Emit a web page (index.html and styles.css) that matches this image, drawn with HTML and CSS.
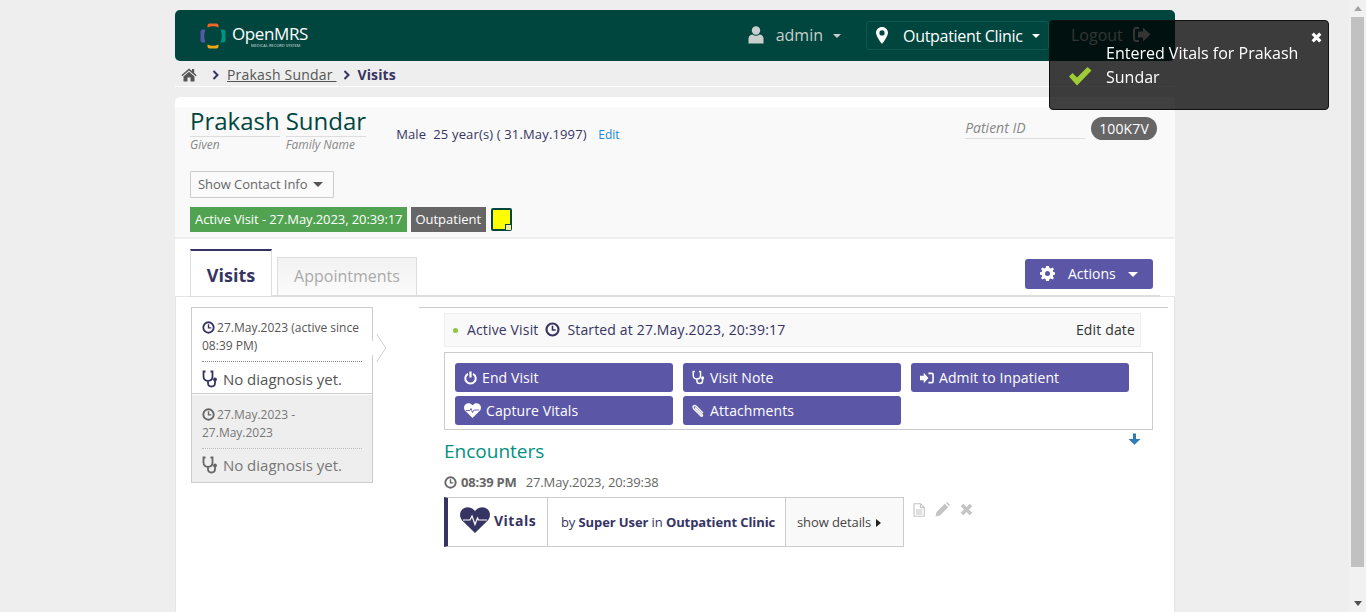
FILE: index.html
```html
<!DOCTYPE html>
<html lang="en">
<head>
<meta charset="utf-8">
<title>OpenMRS - Visits</title>
<link rel="stylesheet" href="styles.css">
</head>
<body>
<svg class="defs" width="0" height="0">
  <defs>
    <symbol id="i-clock" viewBox="0 0 14 14"><circle cx="7" cy="7" r="5.6" fill="none" stroke="currentColor" stroke-width="2"/><path d="M7 3.600V7.400H10" fill="none" stroke="currentColor" stroke-width="1.500"/></symbol>
    <symbol id="i-steth" viewBox="0 0 16 18"><path d="M3.500 1.500H1.500V6.500C1.500 9.500 3.800 10.800 6 10.800S10.500 9.500 10.500 6.500V1.500H8.500M6 10.800V13C6 15.200 7.500 16.500 9.500 16.500S13 15.200 13 13V10.500" fill="none" stroke="currentColor" stroke-width="1.800"/><circle cx="13" cy="9.500" r="1.900" fill="currentColor"/></symbol>
  </defs>
</svg>
<div class="viewport">
  <div class="page">
    <header class="topbar">
      <div class="logo">
        <svg class="logo-mark" width="26" height="26" viewBox="0 0 26 26">
          <path d="M7.500 4.500V2.500Q7.500 .500 9.500 .500H16.500Q18.500 .500 18.500 2.500V4.500Q13 2 7.500 4.500Z" fill="#f26522"/>
          <path d="M5.500 6.500H3Q.500 6.500 .500 9V17Q.500 19.500 3 19.500H5.500Q3 13 5.500 6.500Z" fill="#5b57a6"/>
          <path d="M20.500 6.500H23Q25.500 6.500 25.500 9V17Q25.500 19.500 23 19.500H20.500Q23 13 20.500 6.500Z" fill="#009384"/>
          <path d="M7.500 21.500V23.500Q7.500 25.500 9.500 25.500H16.500Q18.500 25.500 18.500 23.500V21.500Q13 24 7.500 21.500Z" fill="#eea616"/>
        </svg>
        <div class="logo-text">
          <span class="logo-name">OpenMRS</span>
          <span class="logo-sub">MEDICAL RECORD SYSTEM</span>
        </div>
      </div>
      <nav class="top-nav">
        <div class="nav-user">
          <svg class="user-icon" width="16" height="18" viewBox="0 0 16 18"><circle cx="8" cy="4.500" r="4.200" fill="#c9cfcc"/><path d="M0.500 17.500V12.500C0.500 9.800 3 8.500 4.500 8.500Q8 11 11.500 8.500C13 8.500 15.500 9.800 15.500 12.500V17.500Z" fill="#c9cfcc"/></svg>
          <span class="user-name">admin</span>
          <span class="caret-sm caret-grey"></span>
        </div>
        <div class="nav-location">
          <svg width="12" height="17" viewBox="0 0 12 17"><path fill-rule="evenodd" d="M6 0C2.700 0 0 2.600 0 5.800C0 9.500 6 17 6 17S12 9.500 12 5.800C12 2.600 9.300 0 6 0ZM6 3.300A2.600 2.600 0 1 1 6 8.500A2.600 2.600 0 0 1 6 3.300Z" fill="#fff"/></svg>
          <span class="loc-name">Outpatient Clinic</span>
          <span class="caret-sm"></span>
        </div>
        <div class="nav-logout">
          <span>Logout</span>
          <svg width="18" height="15" viewBox="0 0 18 15"><path d="M6 1H3Q1 1 1 3V12Q1 14 3 14H6" fill="none" stroke="#c9cfcc" stroke-width="2"/><path d="M5 4.500H10V0.500L17.500 7.500L10 14.500V10.500H5Z" fill="#c9cfcc"/></svg>
        </div>
      </nav>
    </header>

    <div class="crumbs">
      <svg class="home" width="16" height="14" viewBox="0 0 16 14"><path d="M8 0.500L0.300 7.200L1.300 8.300L8 2.500L14.700 8.300L15.700 7.200L13.200 5V1H11V3L8 0.500Z" fill="#555"/><path d="M2.500 8.500L8 3.800L13.500 8.500V13.500H9.500V9.500H6.500V13.500H2.500Z" fill="#555"/></svg>
      <svg class="chev chev-first" width="7" height="10" viewBox="0 0 7 10"><path d="M1.500 1L5.500 5L1.500 9" fill="none" stroke="#363463" stroke-width="2"/></svg>
      <a class="crumb-link">Prakash Sundar&nbsp;</a>
      <svg class="chev" width="7" height="10" viewBox="0 0 7 10"><path d="M1.500 1L5.500 5L1.500 9" fill="none" stroke="#363463" stroke-width="2"/></svg>
      <strong class="crumb-current">Visits</strong>
    </div>

    <main class="content">
      <section class="patient">
        <div class="patient-top">
          <div class="names">
            <div class="name-part name-given"><span class="name-val">Prakash</span><em>Given</em></div>
            <div class="name-part"><span class="name-val">Sundar</span><em>Family Name</em></div>
          </div>
          <div class="demo">Male&nbsp; 25 year(s) ( 31.May.1997) <a class="edit-link">Edit</a></div>
          <div class="pid">
            <em class="pid-label">Patient ID</em>
            <span class="pid-val">100K7V</span>
          </div>
        </div>
        <button class="contact-btn">Show Contact Info <span class="caret-sm caret-dark"></span></button>
        <div class="tags">
          <span class="tag tag-green">Active Visit - 27.May.2023, 20:39:17</span>
          <span class="tag tag-grey">Outpatient</span>
          <span class="sticky"><span class="sticky-fold"></span></span>
        </div>
      </section>

      <div class="tabs-row">
        <div class="tab tab-active">Visits</div>
        <div class="tab tab-idle">Appointments</div>
        <button class="actions-btn">
          <svg width="15" height="15" viewBox="0 0 15 15"><path fill-rule="evenodd" d="M6 0H9L9.400 2L10.800 2.600L12.500 1.400L14 3L12.800 4.600L13.300 6L15 6.200V8.800L13.300 9L12.800 10.400L14 12L12.500 13.600L10.800 12.400L9.400 13L9 15H6L5.600 13L4.200 12.400L2.500 13.600L1 12L2.200 10.400L1.700 9L0 8.800V6.200L1.700 6L2.200 4.600L1 3L2.500 1.400L4.200 2.600L5.600 2ZM7.500 5A2.500 2.500 0 1 0 7.500 10A2.500 2.500 0 0 0 7.500 5Z" fill="#fff"/></svg>
          <span>Actions</span>
          <span class="caret-md"></span>
        </button>
      </div>

      <div class="visits">
        <aside class="visit-list">
          <div class="visit visit-current">
            <p class="visit-date"><svg class="ic-clock" width="13" height="13"><use href="#i-clock"/></svg> 27.May.2023 (active since 08:39 PM)</p>
            <p class="visit-diag"><svg width="16" height="18"><use href="#i-steth"/></svg> No diagnosis yet.</p>
            <span class="visit-arrow"></span>
          </div>
          <div class="visit visit-past">
            <p class="visit-date"><svg class="ic-clock" width="13" height="13"><use href="#i-clock"/></svg> 27.May.2023 - 27.May.2023</p>
            <p class="visit-diag"><svg width="16" height="18"><use href="#i-steth"/></svg> No diagnosis yet.</p>
          </div>
        </aside>

        <section class="visit-detail">
          <div class="status">
            <span class="dot"></span>
            <span>Active Visit</span>
            <svg class="status-clock" width="15" height="15"><use href="#i-clock"/></svg>
            <span>Started at 27.May.2023, 20:39:17</span>
            <span class="edit-date">Edit date</span>
          </div>
          <div class="action-grid">
            <a class="act"><svg width="13" height="14" viewBox="0 0 13 14"><path d="M4 2.800A5.200 5.200 0 1 0 9 2.800" fill="none" stroke="#fff" stroke-width="2"/><path d="M6.500 0.500V6.500" stroke="#fff" stroke-width="2.200"/></svg>End Visit</a>
            <a class="act"><svg width="13" height="15" viewBox="0 0 16 18" color="#fff"><use href="#i-steth"/></svg>Visit Note</a>
            <a class="act"><svg width="14" height="12" viewBox="0 0 15 12"><path d="M0 3.500H4V0.500L9 6L4 11.500V8.500H0Z" fill="#fff"/><path d="M9 1H12.500Q14 1 14 2.500V9.500Q14 11 12.500 11H9" fill="none" stroke="#fff" stroke-width="1.700"/></svg>Admit to Inpatient</a>
            <a class="act"><svg width="17" height="15" viewBox="0 0 17 15"><path d="M8.500 15L1.200 7.800C-0.500 5.800 -0.300 3 1.400 1.400C3.300 -0.300 6.500 -0.200 8.500 2.300C10.500 -0.200 13.700 -0.300 15.600 1.400C17.300 3 17.500 5.800 15.800 7.800Z" fill="#fff"/><path d="M2 7.500H6L7 5.500L8.500 9.500L10 7H15" fill="none" stroke="#5b57a6" stroke-width="0.900"/></svg>Capture Vitals</a>
            <a class="act"><svg width="13" height="13" viewBox="0 0 13 13"><path d="M3 3.500L10 10.500Q11 11.500 10 12T8.500 11.500L1.500 4.500Q0.500 3 1.500 2T4 2L11 9" fill="none" stroke="#fff" stroke-width="1.400"/></svg>Attachments</a>
          </div>
          <div class="arrow-row">
            <svg width="13" height="12" viewBox="0 0 13 12"><path d="M5 0.500H8V6H12.500L6.500 11.800L0.500 6H5Z" fill="#2b7cb9"/></svg>
          </div>
          <h2 class="enc-title">Encounters</h2>
          <div class="enc-time">
            <svg width="13" height="13"><use href="#i-clock"/></svg>
            <strong>08:39 PM</strong>
            <span>27.May.2023, 20:39:38</span>
          </div>
          <div class="enc-row">
            <div class="encounter">
              <div class="enc-type">
                <svg width="30" height="26" viewBox="0 0 30 26"><path d="M15 26L2.200 13.500C-0.800 10 -0.600 5 2.400 2.300C5.800 -0.800 11.500 -0.400 15 4C18.500 -0.400 24.200 -0.800 27.600 2.300C30.600 5 30.800 10 27.800 13.500Z" fill="#363463"/><path d="M3 13H10L12 9L15 17.500L17.500 11L18.500 13H27" fill="none" stroke="#fff" stroke-width="1.200"/></svg>
                <strong>Vitals</strong>
              </div>
              <div class="enc-by">by <strong>Super User</strong> in <strong>Outpatient Clinic</strong></div>
              <div class="enc-more">show details <span class="tri-right"></span></div>
            </div>
            <div class="enc-icons">
              <svg width="12" height="14" viewBox="0 0 12 14"><path d="M1 .7H7.500L11.300 4.500V13.300H1Z M7.500 .7V4.500H11.300 M3 7H9.300 M3 9H9.300 M3 11H9.300" fill="none" stroke="#c4c4c4" stroke-width="1.100"/></svg>
              <svg width="15" height="15" viewBox="0 0 15 15"><path d="M0.500 14.500L1.500 10L9.800 1.700L13.300 5.200L5 13.500Z M10.800 0.700Q12 -0.300 13 0.700L14.300 2Q15.300 3 14.300 4.200Z" fill="#c4c4c4"/></svg>
              <svg width="13" height="13" viewBox="0 0 13 13"><path d="M2 2L11 11M11 2L2 11" stroke="#c4c4c4" stroke-width="3.600"/></svg>
            </div>
          </div>
        </section>
      </div>
    </main>
  </div>
  <div class="scrollbar">
    <span class="sb-up"></span>
    <span class="sb-thumb"></span>
    <span class="sb-down"></span>
  </div>
</div>

<div class="toast">
  <svg class="toast-check" width="24" height="20" viewBox="0 0 24 20"><path d="M1 10.500L4.500 7L9 11.500L19.500 1L23.500 4.500L9 19.500Z" fill="#9fcd35"/></svg>
  <p class="toast-text">Entered Vitals for Prakash Sundar</p>
  <svg class="toast-close" width="11" height="11" viewBox="0 0 11 11"><path d="M1.700 1.700L9.300 9.300M9.300 1.700L1.700 9.300" stroke="#fff" stroke-width="3.200"/></svg>
</div>
</body>
</html>
```
FILE: styles.css
```css
* { box-sizing: border-box; }
html, body { margin: 0; height: 612px; overflow: hidden; }
body { font-family: "Open Sans", "Noto Sans", sans-serif; font-size: 14px; color: #363463; background: #eee; }
p, h2 { margin: 0; }
em { font-style: italic; }
.defs { position: absolute; }
.viewport { display: flex; height: 612px; }
.page { flex: 1; min-width: 0; display: flex; flex-direction: column; align-items: center; padding-top: 10px; padding-left: 1px; }
.page > * { width: 1000px; flex: none; }

.topbar { height: 51px; background: #00463f; border-radius: 5px; display: flex; align-items: center; justify-content: space-between; }
.logo { display: flex; align-items: center; gap: 6px; margin-left: 25px; margin-top: 1px; }
.logo-text { display: flex; flex-direction: column; align-items: flex-start; width: 73px; color: #fff; }
.logo-name { font-size: 17px; line-height: 17px; letter-spacing: -0.400px; white-space: nowrap; }
.logo-sub { font-size: 4px; line-height: 5px; margin-top: 1px; margin-left: 19px; white-space: nowrap; opacity: .8; }
.top-nav { display: flex; align-items: center; }
.nav-user { display: flex; align-items: center; color: #c9cfcc; font-size: 16px; margin-right: 25px; }
.user-icon { margin-right: 12px; margin-top: -2px; }
.user-name { margin-right: 10px; margin-top: -1px; }
.nav-location { display: flex; align-items: center; width: 183px; height: 29px; padding-left: 9px; border: 1px solid #0a5a50; border-radius: 3px; color: #fff; font-size: 16px; margin-right: 22px; }
.loc-name { margin-left: 15px; margin-right: 9px; white-space: nowrap; letter-spacing: -.3px; }
.nav-logout { display: flex; align-items: center; gap: 10px; color: #c9cfcc; font-size: 16px; margin-right: 24px; margin-top: -2px; width: 80px; }
.caret-sm { width: 0; height: 0; border-left: 4px solid transparent; border-right: 4px solid transparent; border-top: 4px solid #fff; display: inline-block; }
.caret-grey { border-top-color: #c9cfcc; }
.caret-dark { border-top-color: #555; border-left-width: 5px; border-right-width: 5px; border-top-width: 5px; margin-left: 2px; vertical-align: 2px; }
.caret-md { width: 0; height: 0; border-left: 5px solid transparent; border-right: 5px solid transparent; border-top: 5px solid #fff; margin-left: 12px; margin-top: 2px; }

.crumbs { height: 26px; border-bottom: 1px solid #fff; display: flex; align-items: center; padding-left: 6px; padding-top: 2px; font-size: 14px; }
.chev { margin: 0 8px 0 6px; }
.chev-first { margin-left: 15px; }
.crumb-link { color: #555; text-decoration: underline; letter-spacing: .2px; }
.crumb-current { font-weight: 700; color: #363463; letter-spacing: .1px; }

.content { margin-top: 10px; flex: 1; background: #fff; border-radius: 5px 5px 0 0; padding-top: 10px; display: flex; flex-direction: column; }
.patient { height: 132px; background: #f9f9f9; border-bottom: 2px solid #eee; padding: 0 18px 0 15px; }
.patient-top { display: flex; align-items: flex-start; height: 64px; }
.names { display: flex; gap: 6px; }
.name-part { display: flex; flex-direction: column; }
.name-val { font-size: 24px; line-height: 27px; padding-bottom: 2px; color: #00463f; border-bottom: 1px solid #ddd; }
.name-part em { font-size: 12px; line-height: 16px; color: #888; }
.demo { margin-left: 30px; margin-top: 18px; font-size: 13px; line-height: 18px; color: #363463; letter-spacing: .15px; white-space: pre-wrap; }
.edit-link { color: #1a87e0; font-size: 12px; margin-left: 8px; letter-spacing: 0; }
.pid { margin-left: auto; display: flex; align-items: flex-start; gap: 6px; margin-top: 10px; }
.pid-label { width: 120px; height: 22px; font-size: 14px; line-height: 21px; color: #888; border-bottom: 1px solid #ddd; }
.pid-val { height: 23px; padding: 0 8px; border-radius: 12px; background: #666; color: #fff; font-size: 14px; line-height: 23px; letter-spacing: .15px; }
.contact-btn { display: block; width: 144px; height: 27px; padding: 0 0 0 7px; background: #fafafa; border: 1px solid #ccc; border-radius: 1px; color: #666; font: 13px/25px "Open Sans", sans-serif; letter-spacing: -.05px; text-align: left; white-space: nowrap; }
.tags { display: flex; align-items: center; gap: 4px; margin-top: 9px; }
.tag { height: 25px; padding: 0 5px; color: #fff; font-size: 13px; line-height: 24px; white-space: nowrap; }
.tag-green { background: #51a351; letter-spacing: -.09px; }
.tag-grey { background: #666; width: 75px; padding-left: 4px; }
.sticky { position: relative; width: 21px; height: 23px; margin-left: 1px; background: #ff0; border: 2px solid #00463f; border-radius: 2px; }
.sticky-fold { position: absolute; right: -1px; bottom: -1px; width: 6px; height: 6px; background: #f3eda0; border-top: 1px solid #00463f; border-left: 1px solid #00463f; }

.tabs-row { display: flex; align-items: flex-end; height: 58px; margin: 0 15px; border-bottom: 2px solid #ddd; position: relative; flex: none; }
.tab { display: flex; align-items: center; justify-content: center; }
.tab-active { width: 82px; height: 47px; padding-top: 3px; margin-bottom: -1px; background: #fff; border: 1px solid #ddd; border-top: 2px solid #363463; border-bottom: 0; color: #363463; font-weight: 700; font-size: 18px; position: relative; z-index: 1; }
.tab-idle { width: 140px; height: 38px; padding-bottom: 2px; margin-left: 5px; background: linear-gradient(#f2f2f2, #fbfbfb); border: 1px solid #ddd; border-bottom: 0; color: #aaa; font-size: 16px; }
.actions-btn { display: flex; align-items: center; width: 128px; height: 30px; margin: 0 7px 6px auto; padding: 0 0 2px 15px; background: #5b57a6; border: 0; border-radius: 3px; color: #fff; font: 14px "Open Sans", sans-serif; }
.actions-btn span:first-of-type { margin-left: 13px; }

.visits { flex: 1; display: flex; align-items: flex-start; border: 1px solid #e4e4e4; border-bottom: 0; padding: 10px 6px 0 15px; margin-top: -1px; }
.visit-list { width: 182px; flex: none; border: 1px solid #ccc; }
.visit { padding: 10px; position: relative; font-size: 12px; line-height: 18px; color: #666; }
.visit-current { height: 86px; background: #fff; color: #555; border-bottom: 1px solid #ccc; padding-top: 11px; }
.visit-past { height: 88px; background: #eee; border-top: 1px solid #fff; color: #777; padding-top: 11px; }
.visit-date { height: 43px; padding-bottom: 7px; border-bottom: 1px dotted #888; }
.visit-past .visit-date { border-bottom-color: #bbb; }
.ic-clock { vertical-align: -2px; margin-right: -1px; color: #363463; }
.visit-past .ic-clock { color: #666; }
.visit-diag { font-size: 15px; line-height: 20px; margin-top: 7px; white-space: nowrap; color: #555; }
.visit-past .visit-diag { color: #777; margin-top: 6px; }
.visit-current .visit-diag svg { color: #363463; }
.visit-past .visit-diag svg { color: #666; }
.visit-diag svg { vertical-align: -3px; margin-right: 1px; }
.visit-arrow { position: absolute; left: 175px; top: 30px; width: 20px; height: 20px; background: #fff; border-top: 1px solid #ccc; border-right: 1px solid #ccc; transform: scaleX(.65) rotate(45deg); }

.visit-detail { margin-left: 46px; flex: 1; border-top: 1px solid #ccc; padding: 5px 15px 0 25px; min-width: 0; }
.status { width: 697px; height: 34px; display: flex; align-items: center; background: #f9f9f9; border: 1px solid #eee; padding: 0 0 2px 8px; font-size: 14px; color: #363463; letter-spacing: .15px; }
.dot { width: 5px; height: 5px; border-radius: 50%; background: #8cc63f; margin-right: 9px; margin-top: 2px; }
.status-clock { margin: 0 7px; color: #363463; }
.edit-date { margin-left: auto; margin-right: 5px; color: #333; }
.action-grid { width: 709px; height: 78px; margin-top: 5px; display: grid; grid-template-columns: repeat(3, 218px); grid-auto-rows: 29px; gap: 4px 10px; padding: 10px; border: 1px solid #ccc; }
.act { display: flex; align-items: center; gap: 5px; padding-left: 9px; background: #5b57a6; border-radius: 3px; color: #fff; font-size: 14px; letter-spacing: .1px; }
.arrow-row { width: 697px; height: 11px; display: flex; justify-content: flex-end; margin-top: 3px; }
.enc-title { font-size: 19px; font-weight: 400; line-height: 24px; color: #00907f; margin-top: -5px; }
.enc-time { display: flex; align-items: center; gap: 4px; margin-top: 10px; height: 18px; font-size: 13px; color: #666; white-space: nowrap; }
.enc-time strong { color: #666; font-weight: 700; letter-spacing: -.2px; }
.enc-time span { margin-left: 5px; letter-spacing: -.1px; }
.enc-row { display: flex; align-items: flex-start; margin-top: 6px; }
.encounter { display: flex; width: 460px; height: 50px; border: 1px solid #ccc; border-left: 4px solid #363463; font-size: 13px; color: #363463; }
.enc-type { width: 100px; flex: none; display: flex; align-items: center; gap: 4px; padding-left: 12px; border-right: 1px solid #ccc; padding-bottom: 4px; }
.enc-type strong { font-size: 14px; letter-spacing: .5px; }
.enc-by { width: 238px; flex: none; padding-left: 13px; line-height: 48px; white-space: nowrap; letter-spacing: -.1px; border-right: 1px solid #ccc; }
.enc-more { flex: 1; background: #f9f9f9; padding-left: 11px; line-height: 48px; color: #444; white-space: nowrap; letter-spacing: -.1px; }
.tri-right { display: inline-block; width: 0; height: 0; border-top: 4px solid transparent; border-bottom: 4px solid transparent; border-left: 5px solid #222; margin-left: 2px; }
.enc-icons { display: flex; gap: 10px; margin-left: 9px; margin-top: 5px; align-items: center; }

.scrollbar { width: 17px; flex: none; background: #f1f1f1; display: flex; flex-direction: column; align-items: center; }
.sb-up, .sb-down { width: 17px; height: 17px; flex: none; display: flex; align-items: center; justify-content: center; }
.sb-up::after { content: ""; border-left: 4px solid transparent; border-right: 4px solid transparent; border-bottom: 5px solid #a3a3a3; }
.sb-down { margin-top: auto; }
.sb-down::after { content: ""; border-left: 4px solid transparent; border-right: 4px solid transparent; border-top: 5px solid #505050; }
.sb-thumb { width: 13px; height: 550px; background: #c1c1c1; display: block; }

.toast { position: fixed; left: 1049px; top: 20px; width: 280px; height: 90px; background: rgba(0,0,0,.75); border: 1px solid #111; border-radius: 4px; color: #fff; }
.toast-check { position: absolute; left: 18px; top: 45px; }
.toast-text { position: absolute; left: 56px; top: 20px; width: 210px; font-size: 16px; line-height: 24px; }
.toast-close { position: absolute; left: 261px; top: 11px; }
```
